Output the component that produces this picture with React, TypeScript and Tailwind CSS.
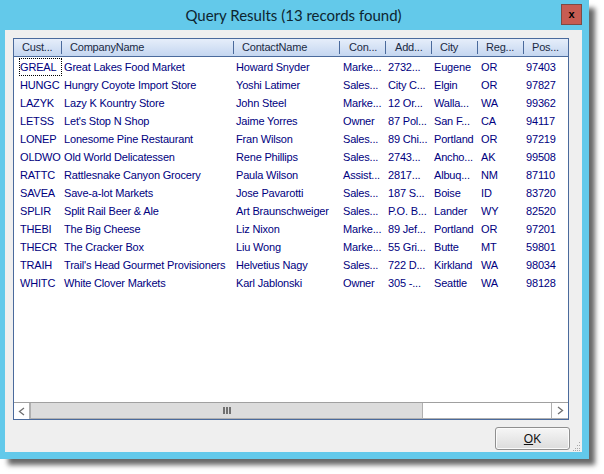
const font = "font-['Liberation_Sans',Arial,sans-serif]";

const columns = [
  { label: "Cust...", width: "w-[48px] border-r", pad: "pl-[8px]" },
  { label: "CompanyName", width: "w-[172px] border-r", pad: "pl-[8px]" },
  { label: "ContactName", width: "w-[106px] border-r", pad: "pl-[8px]" },
  { label: "Con...", width: "w-[46px] border-r", pad: "pl-[9px]" },
  { label: "Add...", width: "w-[46px] border-r", pad: "pl-[9px]" },
  { label: "City", width: "w-[46px] border-r", pad: "pl-[8px]" },
  { label: "Reg...", width: "w-[46px] border-r", pad: "pl-[8px]" },
  { label: "Pos...", width: "w-[46px]", pad: "pl-[8px]" },
];

const cellStyles = [
  "w-[48px] pl-[6px]",
  "w-[172px] pl-[2px]",
  "w-[106px] pl-[2px]",
  "w-[46px] pl-[3px]",
  "w-[46px] pl-[2px]",
  "w-[46px] pl-[2px]",
  "w-[46px] pl-[3px]",
  "w-[46px] pl-[2px]",
];

const rows = [
  ["GREAL", "Great Lakes Food Market", "Howard Snyder", "Marke...", "2732...", "Eugene", "OR", "97403"],
  ["HUNGC", "Hungry Coyote Import Store", "Yoshi Latimer", "Sales...", "City C...", "Elgin", "OR", "97827"],
  ["LAZYK", "Lazy K Kountry Store", "John Steel", "Marke...", "12 Or...", "Walla...", "WA", "99362"],
  ["LETSS", "Let's Stop N Shop", "Jaime Yorres", "Owner", "87 Pol...", "San F...", "CA", "94117"],
  ["LONEP", "Lonesome Pine Restaurant", "Fran Wilson", "Sales...", "89 Chi...", "Portland", "OR", "97219"],
  ["OLDWO", "Old World Delicatessen", "Rene Phillips", "Sales...", "2743...", "Ancho...", "AK", "99508"],
  ["RATTC", "Rattlesnake Canyon Grocery", "Paula Wilson", "Assist...", "2817...", "Albuq...", "NM", "87110"],
  ["SAVEA", "Save-a-lot Markets", "Jose Pavarotti", "Sales...", "187 S...", "Boise", "ID", "83720"],
  ["SPLIR", "Split Rail Beer & Ale", "Art Braunschweiger", "Sales...", "P.O. B...", "Lander", "WY", "82520"],
  ["THEBI", "The Big Cheese", "Liz Nixon", "Marke...", "89 Jef...", "Portland", "OR", "97201"],
  ["THECR", "The Cracker Box", "Liu Wong", "Marke...", "55 Gri...", "Butte", "MT", "59801"],
  ["TRAIH", "Trail's Head Gourmet Provisioners", "Helvetius Nagy", "Sales...", "722 D...", "Kirkland", "WA", "98034"],
  ["WHITC", "White Clover Markets", "Karl Jablonski", "Owner", "305 -...", "Seattle", "WA", "98128"],
];

export default function App() {
  return (
    <div className={`h-[474px] w-[604px] overflow-hidden bg-white ${font}`}>
      {/* Window */}
      <div className="flex h-[459px] w-[589px] flex-col bg-[#63c9ea] pb-[7px] pl-[5px] pr-[7px] shadow-[7px_7px_5px_-1px_rgba(0,0,0,0.6)]">
        {/* Title bar */}
        <div className="flex h-[30px] shrink-0 items-center">
          <div className="flex-1 pl-[21px] text-center font-['Lato',sans-serif] text-[15px] text-[#0d2530]">
            Query Results (13 records found)
          </div>
          <div className="mb-[1px] flex h-[21px] w-[21px] items-center justify-center border border-[#7d4a44] bg-[#c75c52] text-[11px] font-bold leading-none text-black">
            x
          </div>
        </div>

        {/* Client area */}
        <div className="relative flex min-h-0 flex-1 flex-col bg-[#efefef] pl-[8px] pr-[12px] pt-[8px]">
          {/* Grid */}
          <div className="flex h-[382px] w-[556px] flex-col border border-[#4a6a9c] bg-white">
            <div className="flex h-[18px] shrink-0 items-center border-b border-[#4a6a9c] bg-gradient-to-b from-[#e6eefa] to-[#c4d6f0] text-[11px] tracking-[-0.2px] text-[#1a2a44]">
              {columns.map((c) => (
                <div key={c.label} className={`${c.width} ${c.pad} h-[13px] shrink-0 border-[#4a6a9c] leading-[13px]`}>
                  {c.label}
                </div>
              ))}
            </div>

            <div className="min-h-0 flex-1 pt-[1px]">
              {rows.map((row, i) => (
                <div key={row[0]} className="flex h-[18px] items-center text-[11px] tracking-[-0.18px] text-[#000080]">
                  {row.map((text, j) => (
                    <div key={j} className={`${cellStyles[j]} shrink-0 whitespace-nowrap`}>
                      {j === 0 && i === 0 ? (
                        <div className="-ml-[1px] h-[18px] w-[43px] border border-dotted border-black leading-[16px]">{text}</div>
                      ) : (
                        text
                      )}
                    </div>
                  ))}
                </div>
              ))}
            </div>

            {/* Scrollbar */}
            <div className="flex h-[17px] shrink-0 border-t border-[#a0a0a0] bg-white">
              <div className="flex w-[17px] items-center justify-center border-r-2 border-[#b0b0b0]">
                <svg width="7" height="9" viewBox="0 0 7 9" fill="none" stroke="#707070" strokeWidth="1.3">
                  <path d="M6 1 L1.5 4.5 L6 8" />
                </svg>
              </div>
              <div className="flex w-[392px] items-center justify-center border-b border-r border-[#b0b0b0] bg-[#dcdcdc]">
                <div className="flex gap-[1px]">
                  <span className="h-[7px] w-[2px] bg-[#707070]" />
                  <span className="h-[7px] w-[2px] bg-[#707070]" />
                  <span className="h-[7px] w-[2px] bg-[#707070]" />
                </div>
              </div>
              <div className="flex-1 border-b border-[#b0b0b0]" />
              <div className="flex w-[17px] items-center justify-center border-b border-l border-[#b0b0b0]">
                <svg width="7" height="9" viewBox="0 0 7 9" fill="none" stroke="#707070" strokeWidth="1.3">
                  <path d="M1 1 L5.5 4.5 L1 8" />
                </svg>
              </div>
            </div>
          </div>

          {/* Footer */}
          <div className="flex flex-1 items-start justify-end pt-[7px]">
            <button className="flex h-[23px] w-[75px] items-center justify-center rounded-[3px] border border-[#8f8f8f] bg-gradient-to-b from-[#f6f6f6] to-[#dcdcdc] text-[12px] text-[#111] shadow-[inset_0_0_0_1px_#fbfbfb]">
              <span className="underline">O</span>K
            </button>
          </div>

          {/* Resize grip */}
          <svg className="absolute bottom-[1px] right-[1px]" width="8" height="9" viewBox="0 0 8 9" fill="#a8a8a8">
            <rect x="6" y="0" width="1" height="1" />
            <rect x="4" y="3" width="1" height="1" />
            <rect x="6" y="3" width="1" height="1" />
            <rect x="2" y="6" width="1" height="1" />
            <rect x="4" y="6" width="1" height="1" />
            <rect x="6" y="6" width="1" height="1" />
            <rect x="0" y="8" width="1" height="1" />
            <rect x="2" y="8" width="1" height="1" />
            <rect x="4" y="8" width="1" height="1" />
            <rect x="6" y="8" width="1" height="1" />
          </svg>
        </div>
      </div>
    </div>
  );
}
